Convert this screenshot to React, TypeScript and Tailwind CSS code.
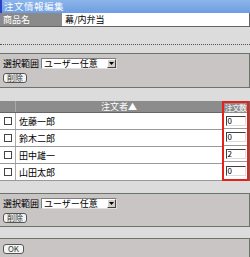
import React from "react";

const font = { fontFamily: '"Noto Sans CJK JP", "Noto Sans", sans-serif' };

function SelectRow() {
  return (
    <div className="flex items-center gap-[2px] h-[11px]">
      <span className="text-[9px] leading-none text-black">選択範囲</span>
      <div className="flex items-center h-[11px] w-[76px] bg-white border border-[#7f7f7f] border-r-[#e0e0e0] border-b-[#e0e0e0]">
        <span className="flex-1 text-[9px] leading-none pl-[2px] text-black">ユーザー任意</span>
        <div className="w-[9px] h-[9px] bg-[#d4d0c8] border border-[#fff] border-r-[#404040] border-b-[#404040] flex items-center justify-center">
          <svg width="5" height="3" viewBox="0 0 5 3"><path d="M0 0h5L2.5 3z" fill="#000" /></svg>
        </div>
      </div>
    </div>
  );
}

function Btn({ label }: { label: string }) {
  return (
    <div className="h-[10px] px-[3px] flex items-center justify-center rounded-[3px] border border-[#555] bg-[#f4f4f4] text-[8px] leading-none text-[#333] w-fit min-w-[21px]">
      {label}
    </div>
  );
}

const names = ["佐藤一郎", "鈴木二郎", "田中雄一", "山田太郎"];
const qty = ["0", "0", "2", "0"];

export default function App() {
  return (
    <div className="w-[250px] h-[257px] bg-[#dcdcdc] overflow-hidden" style={font}>
      <div className="h-[13px] flex items-center bg-gradient-to-b from-[#8cb4ea] to-[#6e9ee0]">
        <div className="w-[2px] h-full bg-[#2b3fc8]" />
        <span className="pl-[2px] text-[9.5px] leading-[13px] text-white font-normal tracking-[0.5px]">注文情報編集</span>
      </div>
      <div className="h-[14px] flex border-b border-b-[#666] border-r border-r-[#666]">
        <div className="w-[62px] bg-[#8a8a8a] text-white text-[9px] leading-[13px] pl-[3px]">商品名</div>
        <div className="flex-1 bg-white text-[9px] leading-[13px] pl-[3px] text-black">幕/内弁当</div>
      </div>
      <div className="h-[17px]" />
      <div className="border-t border-dotted border-[#555] h-0" />
      <div className="h-[8px]" />
      <div className="h-[35px] bg-[#c9c5c5] border-y border-[#6b736b] border-r border-r-[#6b736b] flex flex-col gap-[4px] pl-[3px] pt-[4px]">
        <SelectRow />
        <Btn label="削除" />
      </div>
      <div className="h-[13px]" />
      <div className="flex h-[80px] bg-white border-r border-[#666]">
        <div className="flex-1 flex flex-col">
          <div className="h-[12px] flex bg-[#8c8c8c] border-b border-[#666]">
            <div className="w-[16px] border-r border-[#aaa]" />
            <div className="flex-1 text-white text-[9px] leading-[11px] text-center">注文者▲</div>
          </div>
          {names.map((n) => (
            <div key={n} className="h-[17px] flex items-center border-b border-[#999]">
              <div className="w-[16px] h-full flex items-center justify-center border-r border-[#aaa]">
                <div className="w-[8px] h-[8px] border border-[#444] bg-white" />
              </div>
              <span className="pl-[3px] text-[9px] leading-none text-black">{n}</span>
            </div>
          ))}
        </div>
        <div className="w-[27px] border-2 border-[#e8201c] flex flex-col">
          <div className="h-[10px] bg-[#8c8c8c] text-white text-[8px] leading-[10px] text-center whitespace-nowrap tracking-[-0.8px] overflow-hidden">注文数</div>
          {qty.map((q, i) => (
            <div key={i} className="h-[17px] flex items-center justify-center border-b border-[#999] last:border-b-0">
              <div className="w-[20px] h-[10px] bg-white border border-[#404040] border-r-[#ddd] border-b-[#ddd] text-[8px] leading-[8px] pl-[1px] text-black">{q}</div>
            </div>
          ))}
        </div>
      </div>
      <div className="h-[12px]" />
      <div className="h-[34px] bg-[#c9c5c5] border-y border-[#6b736b] border-r border-r-[#6b736b] flex flex-col gap-[4px] pl-[3px] pt-[4px]">
        <SelectRow />
        <Btn label="削除" />
      </div>
      <div className="h-[11px]" />
      <div className="h-[21px] bg-[#c9c5c5] border-t border-[#6b736b] border-r border-r-[#6b736b] pl-[3px] pt-[5px]">
        <Btn label="OK" />
      </div>
    </div>
  );
}
